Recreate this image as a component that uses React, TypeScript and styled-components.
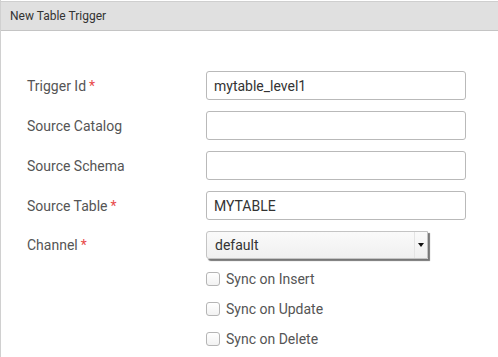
import { Fragment } from "react";
import styled, { createGlobalStyle } from "styled-components";

const GlobalStyle = createGlobalStyle`
  html, body {
    margin: 0;
    padding: 0;
    background: #fff;
  }
  body {
    font-family: Roboto, "Liberation Sans", sans-serif;
  }
`;

const Panel = styled.div`
  width: 498px;
  height: 357px;
  box-sizing: border-box;
  border-left: 1px solid #d0d0d0;
  overflow: hidden;
`;

const Header = styled.div`
  height: 30px;
  margin-top: 1px;
  box-sizing: border-box;
  background: #e0e0e0;
  border-top: 1px solid #cfcfcf;
  border-bottom: 1px solid #c4c4c4;
  padding: 0 9px;
  display: flex;
  align-items: center;
  font-size: 12px;
  color: #333;
`;

const Form = styled.div`
  padding: 40px 0 0 26px;
  display: grid;
  grid-template-columns: 179px 260px;
  row-gap: 11px;
  align-items: center;
`;

const Label = styled.label`
  font-size: 14px;
  color: #555;
`;

const Req = styled.span`
  color: #e84a4a;
  margin-left: 3px;
`;

const Input = styled.div`
  height: 29px;
  box-sizing: border-box;
  border: 1px solid #b9b9b9;
  border-radius: 3px;
  padding: 0 7px;
  display: flex;
  align-items: center;
  font-size: 14px;
  color: #333;
`;

const Select = styled.div`
  width: 222px;
  height: 28px;
  box-sizing: border-box;
  border: 1px solid #c4c4c4;
  border-radius: 3px 0 0 3px;
  background: linear-gradient(#fafafa, #f0f0f0);
  box-shadow: 2px 2px 1px #777;
  display: flex;
  align-items: center;
  font-size: 14px;
  color: #333;
  padding-left: 8px;
`;

const SelectText = styled.span`
  flex: 1;
`;

const Arrow = styled.span`
  width: 12px;
  height: 100%;
  border-left: 1px solid #e4e4e4;
  display: flex;
  align-items: center;
  justify-content: center;
  &::after {
    content: "";
    border-left: 3px solid transparent;
    border-right: 3px solid transparent;
    border-top: 4px solid #111;
  }
`;

const Checks = styled.div`
  grid-column: 2;
  display: flex;
  flex-direction: column;
  gap: 11px;
  margin-top: -1px;
`;

const CheckRow = styled.div`
  display: flex;
  align-items: center;
  height: 19px;
  font-size: 14px;
  color: #555;
`;

const Box = styled.span`
  width: 14px;
  height: 14px;
  box-sizing: border-box;
  border: 1px solid #b5b5b5;
  border-radius: 3px;
  background: linear-gradient(#fff, #f2f2f2);
  margin-right: 6px;
`;

const fields = [
  { label: "Trigger Id", required: true, value: "mytable_level1" },
  { label: "Source Catalog", required: false, value: "" },
  { label: "Source Schema", required: false, value: "" },
  { label: "Source Table", required: true, value: "MYTABLE" },
];

export default function App() {
  return (
    <Panel>
      <GlobalStyle />
      <Header>New Table Trigger</Header>
      <Form>
        {fields.map((f) => (
          <Fragment key={f.label}>
            <Label>
              {f.label}
              {f.required && <Req>*</Req>}
            </Label>
            <Input>{f.value}</Input>
          </Fragment>
        ))}
        <Label>
          Channel<Req>*</Req>
        </Label>
        <Select>
          <SelectText>default</SelectText>
          <Arrow />
        </Select>
        <Checks>
          {["Sync on Insert", "Sync on Update", "Sync on Delete"].map((t) => (
            <CheckRow key={t}>
              <Box />
              {t}
            </CheckRow>
          ))}
        </Checks>
      </Form>
    </Panel>
  );
}
